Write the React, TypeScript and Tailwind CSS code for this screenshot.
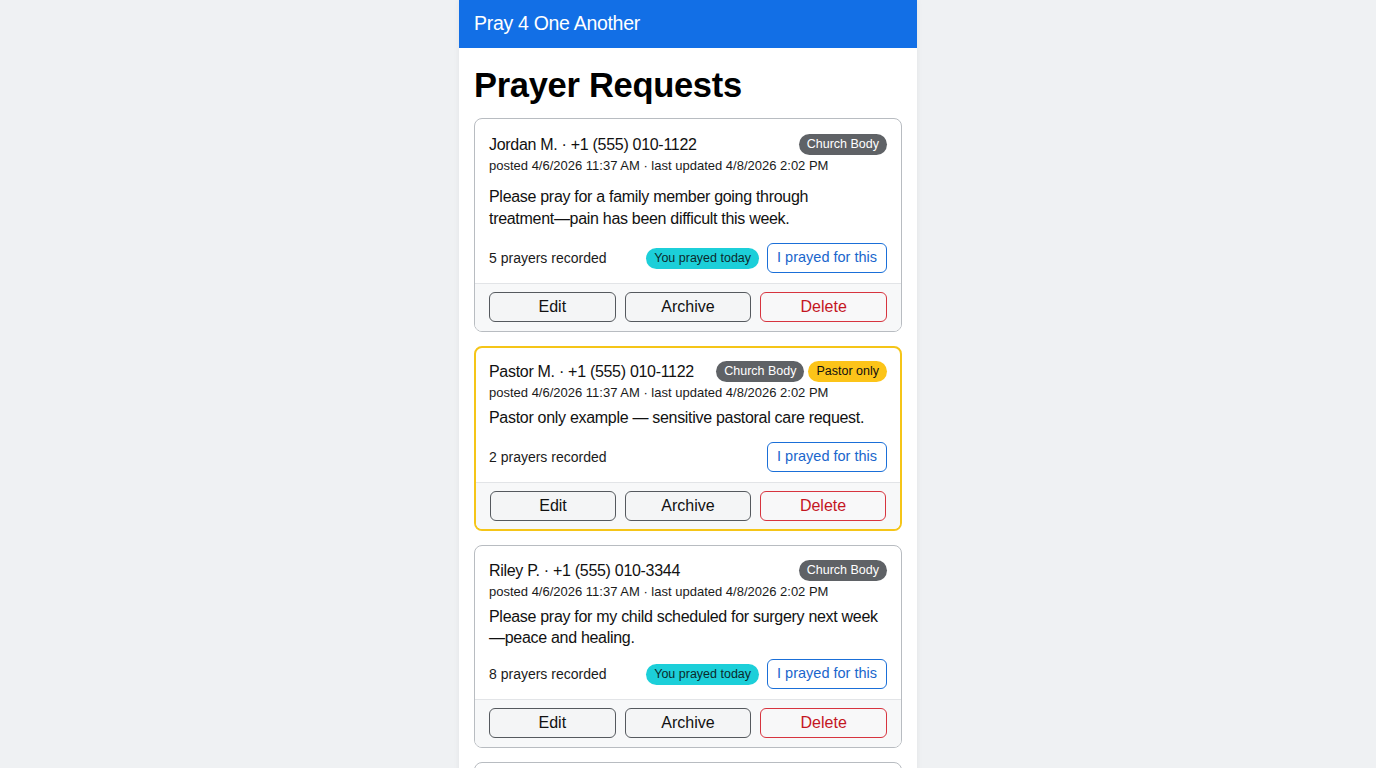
import React from "react";

type Req = {
  id: number;
  name: string;
  phone: string;
  text: string;
  prayers: number;
  prayedToday: boolean;
  pastorOnly?: boolean;
  tight?: boolean;
};

const requests: Req[] = [
  {
    id: 1,
    name: "Jordan M.",
    phone: "+1 (555) 010-1122",
    // word joiners keep "treatment—pain" together
    text: "Please pray for a family member going through treatment\u2060\u2014\u2060pain has been difficult this week.",
    prayers: 5,
    prayedToday: true,
  },
  {
    id: 2,
    name: "Pastor M.",
    phone: "+1 (555) 010-1122",
    text: "Pastor only example \u2014 sensitive pastoral care request.",
    prayers: 2,
    prayedToday: false,
    pastorOnly: true,
  },
  {
    id: 3,
    name: "Riley P.",
    phone: "+1 (555) 010-3344",
    text: "Please pray for my child scheduled for surgery next week\u2014peace and healing.",
    prayers: 8,
    prayedToday: true,
    tight: true,
  },
  {
    id: 4,
    name: "Sam K.",
    phone: "+1 (555) 010-5566",
    text: "Traveling mercies for our mission team.",
    prayers: 3,
    prayedToday: false,
  },
];

function RequestCard({ r, first }: { r: Req; first: boolean }) {
  const bodyCls = first
    ? "mt-[10px] text-[16px] leading-[22px] tracking-[-0.3px] text-[#111]"
    : r.tight
      ? "mt-[4px] text-[16px] leading-[21px] tracking-[-0.3px] text-[#111]"
      : "mt-[4px] text-[16px] leading-[22px] tracking-[-0.3px] text-[#111]";
  return (
    <div
      className={
        r.pastorOnly
          ? "overflow-hidden rounded-lg border-2 border-[#f5c518] bg-white"
          : "overflow-hidden rounded-lg border border-[#b8bcc1] bg-white"
      }
    >
      <div className={r.pastorOnly ? "px-[13px] pt-[12px]" : r.tight ? "px-[14px] pt-[13px]" : "px-[14px] pt-[14px]"}>
        <div className="flex items-start justify-between gap-2">
          <div className="text-[16px] leading-6 tracking-[-0.3px] text-[#111]">
            {r.name} · {r.phone}
          </div>
          <div className="mt-[1px] flex shrink-0 gap-1">
            <span className="rounded-full bg-[#5f6266] px-2 py-[2px] text-[12.5px] leading-[17px] text-white">
              Church Body
            </span>
            {r.pastorOnly && (
              <span className="rounded-full bg-[#fcc419] px-2 py-[2px] text-[12.5px] leading-[17px] text-[#111]">
                Pastor only
              </span>
            )}
          </div>
        </div>
        <div className="mt-[-1px] text-[13px] leading-5 text-[#1a1a1a]">
          posted 4/6/2026 11:37 AM · last updated 4/8/2026 2:02 PM
        </div>
        <p className={bodyCls}>{r.text}</p>
        <div
          className={
            r.tight
              ? "mt-[11px] flex items-center justify-between pb-[10px]"
              : r.pastorOnly
                ? "mt-[13px] flex items-center justify-between pb-[10px]"
                : "mt-[13px] flex items-center justify-between pb-[10px]"
          }
        >
          <span className="text-[14px] text-[#1a1a1a]">{r.prayers} prayers recorded</span>
          <div className="flex items-center gap-2">
            {r.prayedToday && (
              <span className="rounded-full bg-[#1ccfd9] px-2 py-[2px] text-[12.5px] leading-[17px] text-[#0b2a2c]">
                You prayed today
              </span>
            )}
            <button className="h-[30px] rounded-md border border-[#1a6fd8] bg-white px-[9px] text-[14.5px] text-[#1a66cc]">
              I prayed for this
            </button>
          </div>
        </div>
      </div>
      <div
        className={
          r.pastorOnly
            ? "grid grid-cols-3 gap-[9px] border-t border-[#e2e4e7] bg-[#f7f8f9] px-[14px] pb-[8px] pt-[8px]"
            : "grid grid-cols-3 gap-[9px] border-t border-[#e2e4e7] bg-[#f7f8f9] px-[14px] pb-[9px] pt-[8px]"
        }
      >
        <button className="h-[30px] rounded-md border border-[#55595e] bg-[#f4f5f6] text-[16px] text-[#111]">
          Edit
        </button>
        <button className="h-[30px] rounded-md border border-[#55595e] bg-[#f4f5f6] text-[16px] text-[#111]">
          Archive
        </button>
        <button className="h-[30px] rounded-md border border-[#d7343f] bg-[#f8f8f9] text-[16px] text-[#c4161f]">
          Delete
        </button>
      </div>
    </div>
  );
}

export default function App() {
  return (
    <div
      className="flex min-h-screen justify-center bg-[#eff1f3]"
      style={{ fontFamily: '"Liberation Sans", Arial, sans-serif' }}
    >
      <div className="w-[458px] bg-white shadow-[0_0_6px_rgba(0,0,0,0.06)]">
        <header className="flex h-12 items-center bg-[#126fe6] px-[15px]">
          <span className="text-[19.5px] tracking-[-0.3px] text-white">Pray 4 One Another</span>
        </header>
        <main className="px-[15px] pb-6">
          <h1 className="pb-[12px] pt-[16px] text-[34.5px] font-bold leading-[42px] tracking-[-0.3px] text-black">
            Prayer Requests
          </h1>
          <div className="flex flex-col gap-[14px]">
            {requests.map((r, i) => (
              <RequestCard key={r.id} r={r} first={i === 0} />
            ))}
          </div>
        </main>
      </div>
    </div>
  );
}
